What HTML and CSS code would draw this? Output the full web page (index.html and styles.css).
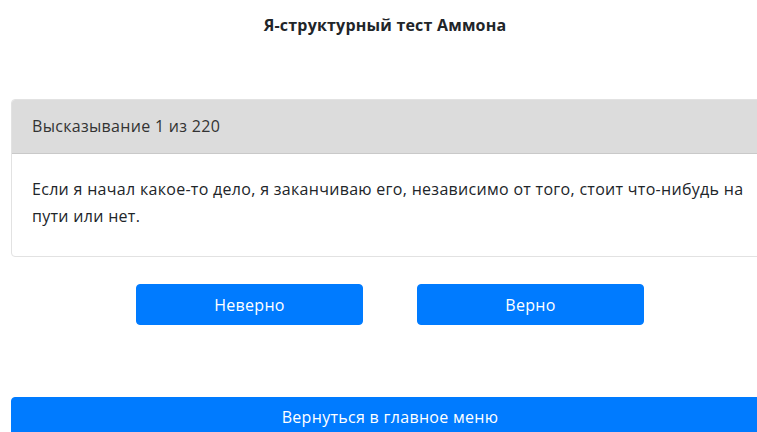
FILE: index.html
```html
<!DOCTYPE html>
<html lang="ru">
<head>
<meta charset="utf-8">
<title>Я-структурный тест Аммона</title>
<link rel="stylesheet" href="styles.css">
</head>
<body>
<main class="page">
  <h1 class="test-title">Я-структурный тест Аммона</h1>

  <section class="card">
    <div class="card-header">Высказывание 1 из 220</div>
    <div class="card-body">
      <p class="statement">Если я начал какое-то дело, я заканчиваю его, независимо от того, стоит что-нибудь на пути или нет.</p>
    </div>
  </section>

  <div class="answers">
    <button class="btn btn-answer" type="button">Неверно</button>
    <button class="btn btn-answer" type="button">Верно</button>
  </div>

  <button class="btn btn-block" type="button">Вернуться в главное меню</button>
</main>
</body>
</html>
```

FILE: styles.css
```css
html {
  overflow: hidden;
}

body {
  margin: 0;
  background: #ffffff;
  color: #212529;
  font-family: "Open Sans", "Noto Sans", sans-serif;
  font-size: 16px;
  letter-spacing: 0.3px;
  line-height: 1.5;
}

.page {
  width: 758px;
  margin-left: 11px;
  display: flex;
  flex-direction: column;
}

.test-title {
  margin: 14px 10px 0 0;
  font-size: 16px;
  font-weight: 700;
  letter-spacing: 0.2px;
  line-height: 22px;
  text-align: center;
  color: #212529;
}

.card {
  margin-top: 63px;
  border: 1px solid #e2e2e2;
  border-radius: 4px;
  overflow: hidden;
}

.card-header {
  background: #dcdcdc;
  border-bottom: 1px solid #c9c9c9;
  padding: 14px 20px 15px;
  line-height: 24px;
  color: #333333;
}

.card-body {
  padding: 22px 20px 26px;
}

.statement {
  margin: 0;
  line-height: 27px;
}

.answers {
  display: flex;
  justify-content: center;
  gap: 54px;
  margin-top: 27px;
}

.btn {
  font-family: inherit;
  font-size: 16px;
  letter-spacing: 0.3px;
  color: #ffffff;
  background: #007bff;
  border: 1px solid #007bff;
  border-radius: 4px;
  cursor: pointer;
}

.btn-answer {
  width: 227px;
  height: 41px;
}

.btn-block {
  margin-top: 72px;
  width: 100%;
  height: 40px;
}
```
